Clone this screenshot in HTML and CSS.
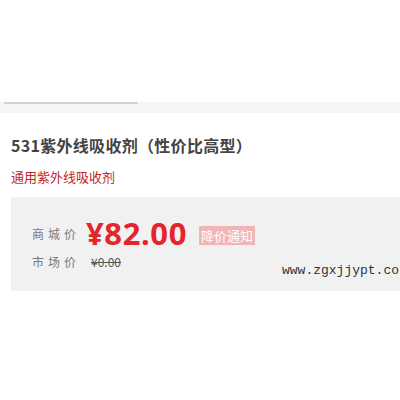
FILE: index.html
```html
<!DOCTYPE html>
<html>
<head>
<meta charset="utf-8">
<link rel="stylesheet" href="styles.css">
</head>
<body>
<div class="page">
  <div class="tabbar"><div class="tabline"></div></div>
  <h1 class="title">531紫外线吸收剂（性价比高型）</h1>
  <div class="sub">通用紫外线吸收剂</div>
  <div class="pricebox">
    <div class="row row1">
      <span class="label">商城价</span>
      <span class="price">¥82.00</span>
      <span class="badge">降价通知</span>
    </div>
    <div class="row row2">
      <span class="label">市场价</span>
      <span class="old">¥0.00</span>
    </div>
    <div class="wm">www.zgxjjypt.co</div>
  </div>
</div>
</body>
</html>
```
FILE: styles.css
```css
* { box-sizing: border-box; }
html, body { margin: 0; padding: 0; background: #fff; }
body { width: 400px; height: 400px; overflow: hidden; font-family: "Microsoft YaHei", "Noto Sans CJK SC", "Liberation Sans", sans-serif; }
.page { padding-top: 102px; }
.tabbar { height: 11px; background: #f6f6f6; }
.tabline { width: 134px; margin-left: 4px; height: 2px; background: #d2d2d2; border-radius: 1px; }
.title { margin: 20px 0 0 11px; font-size: 16px; font-weight: bold; color: #444; line-height: 24px; letter-spacing: 0.3px; }
.sub { margin: 10px 0 0 11px; font-size: 13px; color: #c3262c; line-height: 20px; }
.pricebox { position: relative; margin: 10px 0 0 11px; height: 94px; background: #f1f1f1; padding: 18px 0 0 21px; overflow: hidden; }
.row { display: flex; align-items: center; }
.label { font-size: 12px; color: #7a7a7a; letter-spacing: 4px; width: 54px; }
.price { font-family: "Microsoft YaHei", "Noto Sans", "Liberation Sans", sans-serif; font-size: 31px; font-weight: bold; color: #e3262c; line-height: 36px; letter-spacing: 0.6px; }
.badge { margin-left: 12px; margin-top: 4px; background: #f0b6b6; color: #fff; font-size: 13px; line-height: 19px; padding: 0 2px; }
.row2 { margin-top: 2px; }
.old { font-size: 12px; color: #555; text-decoration: line-through; margin-left: 5px; }
.wm { position: absolute; left: 271px; top: 66px; font-family: "Liberation Mono", "DejaVu Sans Mono", monospace; font-size: 13px; color: #333; white-space: nowrap; }
```
